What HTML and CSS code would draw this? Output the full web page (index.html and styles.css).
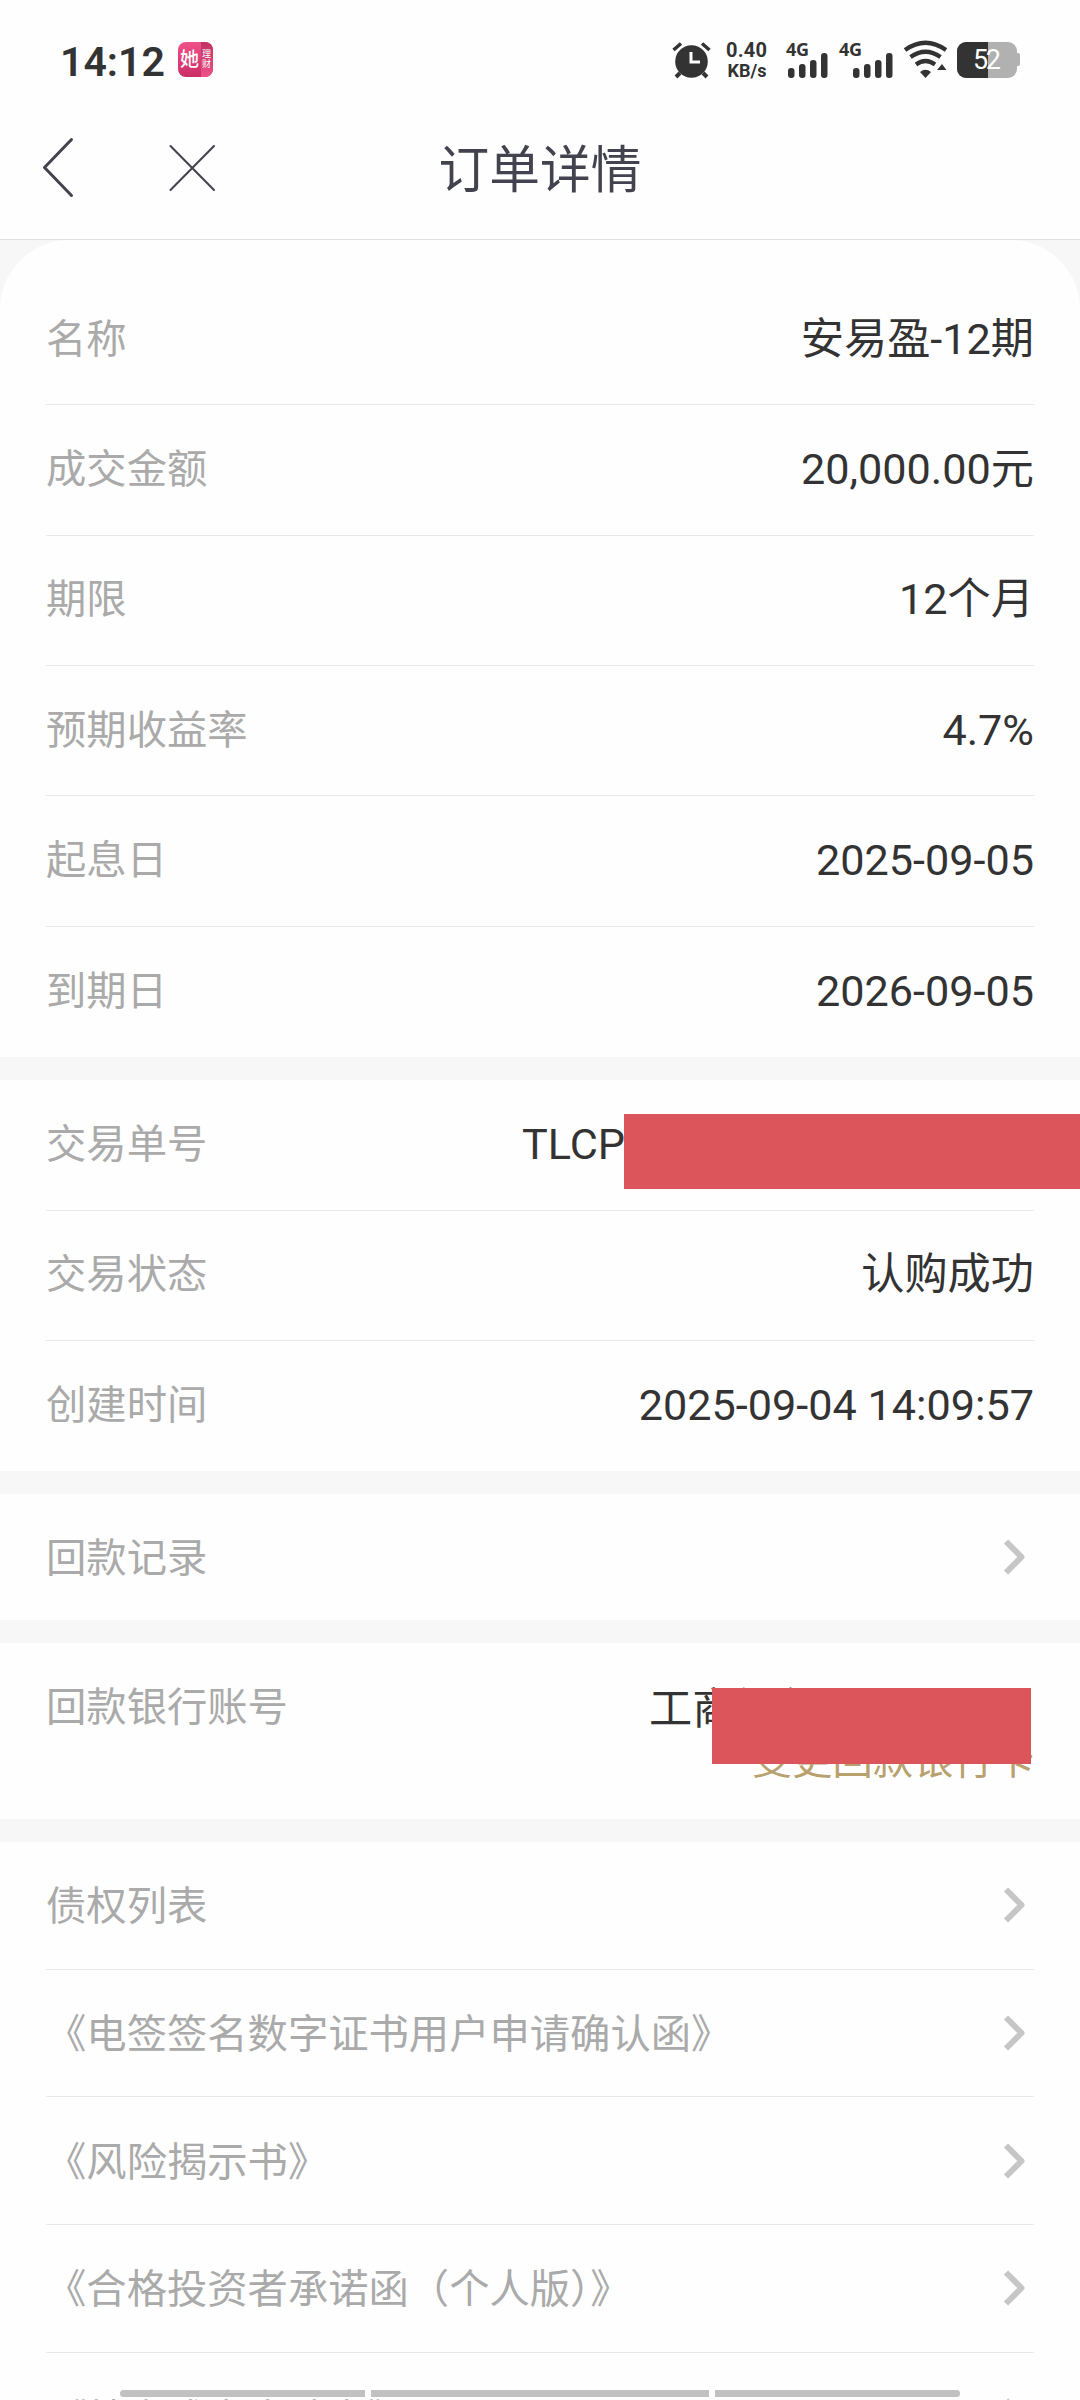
FILE: index.html
```html
<!DOCTYPE html>
<html lang="zh-CN">
<head>
<meta charset="utf-8">
<title>订单详情</title>
<link rel="stylesheet" href="styles.css">
</head>
<body>
<div class="screen">
  <div class="status">
    <span class="clock">14:12</span>
    <span class="app"><span class="app-main">她</span><span class="app-side">理<br>财</span></span>
    <svg class="sysicons" width="360" height="50" viewBox="0 0 360 50">
      <g fill="#333" stroke="none">
        <circle cx="31.500" cy="26.500" r="16.300"/>
        <path d="M13.500 15l7.500-6.500M49.500 15L42 8.500" stroke="#333" stroke-width="3.500"/>
        <path d="M20 38l-4 4M43 38l4 4" stroke="#333" stroke-width="4"/>
        <path d="M31 17v10h9" stroke="#fff" stroke-width="3" fill="none"/>
        <text x="66" y="22" class="net" textLength="41">0.40</text>
        <text x="67.500" y="42" class="unit" textLength="39" lengthAdjust="spacingAndGlyphs">KB/s</text>
        <text x="126" y="21" class="gen" textLength="23">4G</text>
        <rect x="128" y="33" width="6.500" height="10" rx="3"/>
        <rect x="139" y="29" width="6.500" height="14" rx="3"/>
        <rect x="150" y="25" width="6.500" height="18" rx="3"/>
        <rect x="161" y="18" width="6.500" height="25" rx="3"/>
        <text x="179" y="21" class="gen" textLength="23">4G</text>
        <rect x="193" y="33" width="6.500" height="10" rx="3"/>
        <rect x="204" y="29" width="6.500" height="14" rx="3"/>
        <rect x="215" y="25" width="6.500" height="18" rx="3"/>
        <rect x="226" y="18" width="6.500" height="25" rx="3"/>
        <path d="M245 15Q265.500 .5 286 15M250.500 22Q265.500 11.500 280.500 22M256 29.500Q265.500 22.500 275 29.500" fill="none" stroke="#333" stroke-width="4.300"/>
        <path d="M260 37q5.500-4.500 11 0l-5.500 6zM277 35l5-6 4.500 6z"/>
        <rect x="297" y="7" width="60" height="36" rx="9" fill="#b1b1b1"/>
        <path d="M356 18h2a2 2 0 0 1 2 2v9a2 2 0 0 1-2 2h-2z" fill="#b1b1b1"/>
        <path d="M306 7h22v36h-22a9 9 0 0 1-9-9V16a9 9 0 0 1 9-9z"/>
        <text x="313" y="34" class="charge" textLength="28">52</text>
      </g>
    </svg>
  </div>
  <div class="nav">
    <svg class="nav-icons" width="240" height="80" viewBox="0 0 240 80">
      <path d="M71.500 12.500L44.500 40.500L71.500 68.500" fill="none" stroke="#43434f" stroke-width="3" stroke-linecap="round" stroke-linejoin="round"/>
      <path d="M170.500 19l43.500 44M214 19l-43.500 44" fill="none" stroke="#43434f" stroke-width="2" stroke-linecap="round"/>
    </svg>
    <h1 class="title">订单详情</h1>
  </div>
  <div class="page">
    <section class="group first">
      <div class="row"><span class="label">名称</span><span class="value">安易盈-12期</span></div>
      <div class="row"><span class="label">成交金额</span><span class="value">20,000.00元</span></div>
      <div class="row"><span class="label">期限</span><span class="value">12个月</span></div>
      <div class="row"><span class="label">预期收益率</span><span class="value">4.7%</span></div>
      <div class="row"><span class="label">起息日</span><span class="value">2025-09-05</span></div>
      <div class="row"><span class="label">到期日</span><span class="value">2026-09-05</span></div>
    </section>
    <section class="group">
      <div class="row"><span class="label">交易单号</span><span class="value order">TLCP<span class="mask mask-order"></span></span></div>
      <div class="row"><span class="label">交易状态</span><span class="value">认购成功</span></div>
      <div class="row"><span class="label">创建时间</span><span class="value">2025-09-04 14:09:57</span></div>
    </section>
    <section class="group">
      <div class="row record"><span class="label">回款记录</span><svg class="chevron" viewBox="0 0 24 38"><path d="M3 3.500L18.500 19L3 34.500"/></svg></div>
    </section>
    <section class="group bank">
      <span class="label">回款银行账号</span>
      <div class="bank-info">
        <span class="value bank-name">工商银行(尾号</span>
        <span class="change">变更回款银行卡</span>
        <span class="mask mask-bank"></span>
      </div>
    </section>
    <section class="group docs">
      <div class="row"><span class="label">债权列表</span><svg class="chevron" viewBox="0 0 24 38"><path d="M3 3.500L18.500 19L3 34.500"/></svg></div>
      <div class="row"><span class="label">《电签签名数字证书用户申请确认函》</span><svg class="chevron" viewBox="0 0 24 38"><path d="M3 3.500L18.500 19L3 34.500"/></svg></div>
      <div class="row"><span class="label">《风险揭示书》</span><svg class="chevron" viewBox="0 0 24 38"><path d="M3 3.500L18.500 19L3 34.500"/></svg></div>
      <div class="row"><span class="label">《合格投资者承诺函（个人版）》</span><svg class="chevron" viewBox="0 0 24 38"><path d="M3 3.500L18.500 19L3 34.500"/></svg></div>
      <div class="row"><span class="label">《特定成交申请书》</span><svg class="chevron" viewBox="0 0 24 38"><path d="M3 3.500L18.500 19L3 34.500"/></svg></div>
    </section>
  </div>
  <div class="gesture"><i></i><i class="mid"></i><i></i></div>
</div>
</body>
</html>
```
FILE: styles.css
```css
* { box-sizing: border-box; }
body {
  margin: 0;
  background: #fefefe;
  font-family: Roboto, "Noto Sans CJK SC", sans-serif;
}
.screen {
  position: relative;
  width: 1080px;
  height: 2400px;
  overflow: hidden;
}
.status {
  display: flex;
  height: 119px;
  padding: 0 60px;
}
.clock {
  width: 118px;
  padding-top: 38px;
  font-size: 41px;
  line-height: 48px;
  font-weight: 600;
  color: #333;
}
.app {
  display: flex;
  width: 35px;
  height: 35px;
  margin-top: 42px;
  overflow: hidden;
  border-radius: 8px;
  background: linear-gradient(#ee5288, #cb2e65);
  color: #fff;
}
.app-main {
  width: 23px;
  padding-left: 2px;
  font-size: 19px;
  line-height: 35px;
  font-weight: 500;
}
.app-side {
  width: 12px;
  padding: 8px 0 0 1px;
  font-size: 9px;
  line-height: 9.5px;
  background: linear-gradient(#bd3464, #ee5288);
}
.sysicons { margin: 35px 0 0 447px; flex: none; }
.net { font-size: 20px; font-weight: 700; }
.unit { font-size: 18px; font-weight: 700; }
.gen { font: 700 18px "Open Sans", sans-serif; }
.charge { font-size: 27px; fill: #fff; }
.nav {
  display: flex;
  height: 121px;
  padding-top: 8px;
  border-bottom: 1px solid #dfdfdf;
}
.nav-icons { flex: none; }
.title {
  width: 600px;
  margin: 0;
  padding-top: 4px;
  text-align: center;
  font-size: 50.700px;
  line-height: 80px;
  font-weight: 400;
  color: #43434f;
}
.page {
  display: flex;
  flex-direction: column;
  gap: 22.900px;
  background: #f7f7f7;
}
.group { padding: 0 46px; background: #fefefe; }
.first { padding-top: 34.900px; border-radius: 69px 69px 0 0; }
.row {
  display: flex;
  align-items: center;
  justify-content: space-between;
  height: 130.400px;
  border-bottom: 1px solid #e9e9e9;
}
.row:last-child { border-bottom-color: transparent; }
.label { font-size: 40.320px; line-height: 60px; color: #aaa; white-space: nowrap; }
.value { font-size: 43.200px; line-height: 60px; color: #333; white-space: nowrap; }
.order { position: relative; width: 512px; }
.mask { position: absolute; background: #db555a; }
.mask-order { left: 102px; top: -1px; width: 456px; height: 75px; }
.record { height: 126px; padding-top: 1px; }
.record .label { padding-top: 4px; }
.chevron {
  width: 24px;
  height: 38px;
  margin-right: 7px;
  fill: none;
  stroke: #c6c6c6;
  stroke-width: 6;
  stroke-linejoin: round;
}
.bank {
  display: flex;
  justify-content: space-between;
  height: 176px;
  padding-top: 35px;
}
.bank-info {
  position: relative;
  display: flex;
  flex-direction: column;
  width: 385px;
}
.bank-name { padding-top: 2px; }
.change { font-size: 40.320px; line-height: 42px; text-align: right; color: #b9a16e; }
.mask-bank { left: 63px; top: 10px; width: 319px; height: 76px; }
.docs .row { height: 127.700px; }
.docs .label { padding-top: 4px; }
.docs .row:last-child .label { padding-top: 7px; }
.gesture {
  position: absolute;
  left: 120px;
  bottom: 3px;
  display: flex;
  gap: 6px;
  width: 840px;
  height: 7px;
}
.gesture i { width: 245px; background: #c1c1c1; }
.gesture .mid { width: 338px; }
.gesture i:first-child { border-radius: 4px 0 0 4px; }
.gesture i:last-child { border-radius: 0 4px 4px 0; }
```
